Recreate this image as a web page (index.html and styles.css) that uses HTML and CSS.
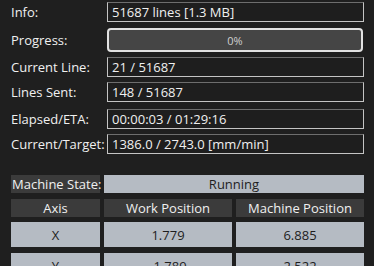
FILE: index.html
```html
<!DOCTYPE html>
<html lang="en">
<head>
  <meta charset="UTF-8">
  <title>Job Status</title>
  <link rel="stylesheet" href="styles.css">
</head>
<body>
  <div class="panel">
    <div class="status-grid">
      <div class="label">Info:</div>
      <div class="field">51687 lines [1.3 MB]</div>

      <div class="label row-progress">Progress:</div>
      <div class="progress row-progress">
        <div class="progress-fill" style="width: 0%"></div>
        <span class="progress-text">0%</span>
      </div>

      <div class="label">Current Line:</div>
      <div class="field">21 / 51687</div>

      <div class="label">Lines Sent:</div>
      <div class="field">148 / 51687</div>

      <div class="label row-gap">Elapsed/ETA:</div>
      <div class="field row-gap">00:00:03 / 01:29:16</div>

      <div class="label">Current/Target:</div>
      <div class="field">1386.0 / 2743.0 [mm/min]</div>
    </div>

    <div class="machine-grid">
      <div class="cell head first">Machine State:</div>
      <div class="cell value state">Running</div>

      <div class="cell head">Axis</div>
      <div class="cell head">Work Position</div>
      <div class="cell head">Machine Position</div>

      <div class="cell value tall">X</div>
      <div class="cell value tall">1.779</div>
      <div class="cell value tall">6.885</div>

      <div class="cell value tall">Y</div>
      <div class="cell value tall">-1.789</div>
      <div class="cell value tall">2.522</div>
    </div>
  </div>
</body>
</html>
```

FILE: styles.css
```css
body {
  margin: 0;
  background-color: #1f1f1f;
  font-family: 'Open Sans', 'Noto Sans', sans-serif;
  font-size: 13px;
  color: #f0f0f0;
  overflow: hidden;
}

.panel {
  padding: 2px 10px 0 11px;
}

.status-grid {
  display: grid;
  grid-template-columns: 96px 1fr;
  row-gap: 5px;
}

.label {
  display: flex;
  align-items: center;
  height: 20px;
  white-space: nowrap;
}

.field {
  display: flex;
  align-items: center;
  box-sizing: border-box;
  height: 20px;
  padding: 0 4px 1px;
  border: 1px solid #c4c4c4;
  border-top-color: #6e6e6e;
  background-color: #1e1e1e;
  white-space: nowrap;
}

.row-progress {
  height: 24px;
  margin-top: 1px;
}

.row-gap {
  margin-top: 2px;
}

/* progress bar with rounded white frame */
.progress {
  position: relative;
  box-sizing: border-box;
  margin-right: 1px;
  border: 2px solid #e2e2e2;
  border-radius: 4px;
  background-color: #454545;
  overflow: hidden;
}

.progress-fill {
  height: 100%;
  background-color: #3a7bd5;
}

.progress-text {
  position: absolute;
  inset: 0;
  display: flex;
  align-items: center;
  justify-content: center;
  font-size: 11px;
  color: #d0d0d0;
}

.machine-grid {
  display: grid;
  grid-template-columns: 89px 128px 128px;
  column-gap: 4px;
  margin-top: 21px;
}

.cell {
  display: flex;
  align-items: center;
  justify-content: center;
  height: 18px;
  margin-bottom: 5px;
  white-space: nowrap;
}

.head {
  background-color: #3b3b3b;
  color: #f0f0f0;
}

.first {
  justify-content: flex-start;
  padding-left: 1px;
}

.value {
  background-color: #b5bbc3;
  color: #1e1e1e;
}

.state {
  grid-column: 2 / 4;
}

.first,
.state {
  margin-bottom: 6px;
}

.tall {
  height: 25px;
  margin-bottom: 6px;
}
```
